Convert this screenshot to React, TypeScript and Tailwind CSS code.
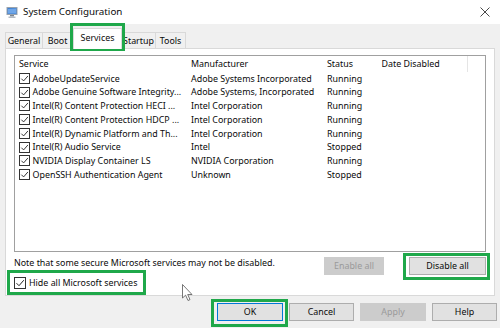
import React from "react";

const services: [string, string, string][] = [
  ["AdobeUpdateService", "Adobe Systems Incorporated", "Running"],
  ["Adobe Genuine Software Integrity...", "Adobe Systems, Incorporated", "Running"],
  ["Intel(R) Content Protection HECI ...", "Intel Corporation", "Running"],
  ["Intel(R) Content Protection HDCP ...", "Intel Corporation", "Running"],
  ["Intel(R) Dynamic Platform and Th...", "Intel Corporation", "Running"],
  ["Intel(R) Audio Service", "Intel", "Stopped"],
  ["NVIDIA Display Container LS", "NVIDIA Corporation", "Running"],
  ["OpenSSH Authentication Agent", "Unknown", "Stopped"],
];

function Check({ size = 11 }: { size?: number }) {
  return (
    <span
      className="flex shrink-0 items-center justify-center border border-[#333] bg-white"
      style={{ width: size, height: size }}
    >
      <svg width={size - 2} height={size - 2} viewBox="0 0 10 10">
        <path d="M1.5 5.2 L4 7.7 L8.8 2.2" fill="none" stroke="#222" strokeWidth="1" />
      </svg>
    </span>
  );
}

export default function App() {
  const font = { fontFamily: '"Noto Sans", "Open Sans", Arial, sans-serif' };
  return (
    <div
      className="relative h-[328px] w-[500px] overflow-hidden bg-[#f0f0f0] text-[#0a0a0a]"
      style={font}
    >
      {/* title bar */}
      <div className="flex h-[24px] items-center bg-white">
        <svg className="ml-[6px]" width="13" height="13" viewBox="0 0 13 13">
          <rect x="0.5" y="1" width="11" height="8" fill="#9aa3ad" />
          <rect x="1.5" y="2" width="9" height="6" fill="#3d7fd0" />
          <path d="M2 3 L10 2.5 L10 7.5 L2 7.5 Z" fill="#6fa6e8" />
          <rect x="4" y="9" width="4" height="1.5" fill="#7d858f" />
          <rect x="2.5" y="10.5" width="7" height="1.5" fill="#b5bcc4" />
        </svg>
        <span className="ml-[4px] text-[9.8px] leading-none">System Configuration</span>
        <div className="ml-auto mr-[5px] flex h-[24px] w-[20px] items-center justify-center">
          <svg width="10" height="10" viewBox="0 0 10 10">
            <path d="M0.5 0.5 L9.5 9.5 M9.5 0.5 L0.5 9.5" stroke="#333" strokeWidth="0.9" />
          </svg>
        </div>
      </div>

      {/* tabs */}
      <div className="flex h-[24px] items-end pl-[5px] text-[8.9px]">
        <div className="flex h-[16px] w-[38px] items-center justify-center border border-b-0 border-[#d9d9d9]">General</div>
        <div className="flex h-[16px] w-[30px] items-center justify-center border border-b-0 border-l-0 border-[#d9d9d9]">Boot</div>
        <div className="relative z-10 -mb-px flex h-[21px] w-[49px] items-center justify-center border border-b-0 border-[#d9d9d9] bg-white pb-[2px]">Services</div>
        <div className="flex h-[16px] w-[34px] items-center justify-center border border-b-0 border-l-0 border-[#d9d9d9]">Startup</div>
        <div className="flex h-[16px] w-[30px] items-center justify-center border border-b-0 border-l-0 border-[#d9d9d9]">Tools</div>
      </div>

      {/* tab page */}
      <div className="mx-[5px] flex h-[248px] flex-col border border-[#d9d9d9] bg-white px-[8px] pt-[6px] text-[8.9px]">
        <div className="h-[197px] border border-[#a0a0a0] bg-white">
          <div className="flex h-[15.5px] items-center">
            <div className="w-[172px] pl-[4px]">Service</div>
            <div className="w-[136px] pl-[4px]">Manufacturer</div>
            <div className="w-[54.5px] pl-[4px]">Status</div>
            <div className="h-full w-[90.5px] border-r border-[#e5e5e5] pl-[4px] leading-[15.5px]">Date Disabled</div>
          </div>
          {services.map(([name, mfr, status]) => (
            <div key={name} className="flex h-[13.75px] items-center whitespace-nowrap">
              <div className="flex w-[172px] items-center gap-[3px] pl-[3.5px]">
                <Check />
                <span>{name}</span>
              </div>
              <div className="w-[136px] pl-[4px]">{mfr}</div>
              <div className="w-[54.5px] pl-[4px]">{status}</div>
            </div>
          ))}
        </div>
        <div className="mt-[5px] flex h-[19px]">
          <span className="whitespace-nowrap leading-[12px]">Note that some secure Microsoft services may not be disabled.</span>
          <div className="ml-auto flex gap-[25px]">
            <div className="flex h-[18px] w-[60px] items-center justify-center bg-[#cccccc] text-[#9a9a9a]">Enable all</div>
            <div className="flex h-[18px] w-[77px] items-center justify-center border border-[#adadad] bg-[#e1e1e1]">Disable all</div>
          </div>
        </div>
        <div className="mt-[1px] flex h-[12px] items-center gap-[3px]">
          <Check size={12} />
          <span>Hide all Microsoft services</span>
        </div>
      </div>

      {/* bottom buttons */}
      <div className="flex h-[32px] items-center justify-end gap-[6px] pr-[3px] text-[8.9px]">
        <div className="flex h-[18px] w-[66px] items-center justify-center border border-[#0078d7] bg-[#e1e1e1]">OK</div>
        <div className="flex h-[18px] w-[65px] items-center justify-center border border-[#adadad] bg-[#e1e1e1]">Cancel</div>
        <div className="flex h-[18px] w-[66px] items-center justify-center bg-[#cccccc] text-[#9a9a9a]">Apply</div>
        <div className="flex h-[18px] w-[65px] items-center justify-center border border-[#adadad] bg-[#e1e1e1]">Help</div>
      </div>

      {/* annotation boxes */}
      <div className="pointer-events-none absolute left-[70px] top-[23px] h-[28px] w-[55px] border-[3px] border-[#1fa84a]" />
      <div className="pointer-events-none absolute left-[7px] top-[270px] h-[25px] w-[139px] border-[3px] border-[#1fa84a]" />
      <div className="pointer-events-none absolute left-[403px] top-[253px] h-[27px] w-[87px] border-[3px] border-[#1fa84a]" />
      <div className="pointer-events-none absolute left-[211px] top-[299px] h-[28px] w-[77px] border-[3px] border-[#1fa84a]" />

      {/* mouse cursor */}
      <svg className="pointer-events-none absolute left-[182px] top-[284px]" width="12" height="18" viewBox="0 0 12 18">
        <path d="M0.5 0.5 L0.5 14 L3.6 11.2 L6 16.5 L8 15.6 L5.7 10.5 L10 10.5 Z" fill="#fff" stroke="#555" strokeWidth="0.8" />
      </svg>
    </div>
  );
}
